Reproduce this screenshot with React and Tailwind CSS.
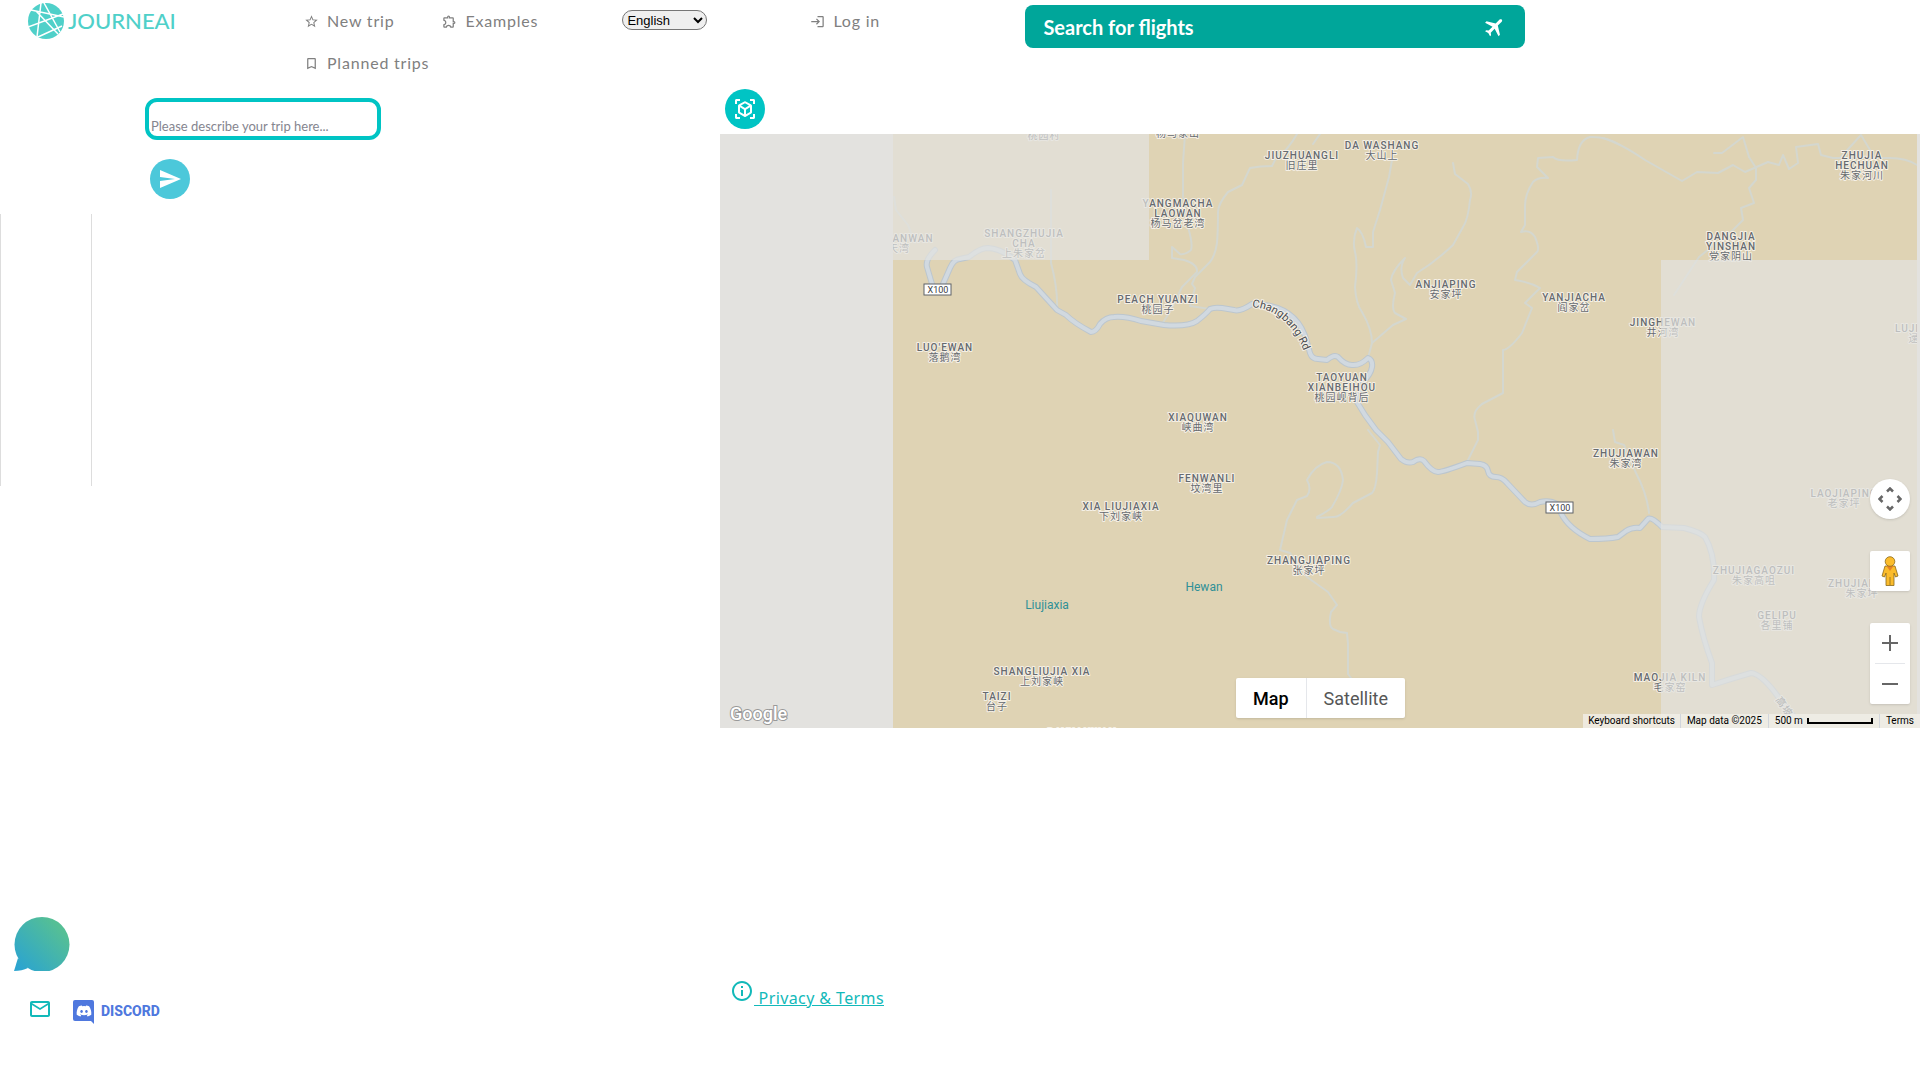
import React, { useState } from 'react';
import {
  MdStarOutline,
  MdOutlineExtension,
  MdBookmarkBorder,
  MdLogin,
  MdSend,
  MdViewInAr,
  MdFlight,
  MdInfoOutline,
  MdMailOutline,
} from 'react-icons/md';
import { FaDiscord } from 'react-icons/fa';

const navLinks = [
  { label: 'New trip', Icon: MdStarOutline },
  { label: 'Examples', Icon: MdOutlineExtension },
  { label: 'Planned trips', Icon: MdBookmarkBorder },
];

// x is the middle of the label, y the baseline of its first line
const places = [
  { x: 324, y: 5, lines: ['桃园村'] },
  { x: 458, y: 3, lines: ['杨马家山'] },
  { x: 458, y: 73, lines: ['YANGMACHA', 'LAOWAN', '杨马岔老湾'] },
  { x: 582, y: 25, lines: ['JIUZHUANGLI', '旧庄里'] },
  { x: 662, y: 15, lines: ['DA WASHANG', '大山上'] },
  { x: 726, y: 154, lines: ['ANJIAPING', '安家坪'] },
  { x: 854, y: 167, lines: ['YANJIACHA', '阎家岔'] },
  { x: 438, y: 169, lines: ['PEACH YUANZI', '桃园子'] },
  { x: 622, y: 247, lines: ['TAOYUAN', 'XIANBEIHOU', '桃园岘背后'] },
  { x: 478, y: 287, lines: ['XIAQUWAN', '峡曲湾'] },
  { x: 304, y: 103, lines: ['SHANGZHUJIA', 'CHA', '上朱家岔'] },
  { x: 193, y: 108, lines: ['ANWAN'] },
  { x: 179, y: 118, lines: ['天湾'] },
  { x: 225, y: 217, lines: ["LUO'EWAN", '落鹅湾'] },
  { x: 943, y: 192, lines: ['JINGHEWAN', '井河湾'] },
  { x: 1011, y: 106, lines: ['DANGJIA', 'YINSHAN', '党家阴山'] },
  { x: 1142, y: 25, lines: ['ZHUJIA', 'HECHUAN', '朱家河川'] },
  { x: 1187, y: 198, lines: ['LUJI'] },
  { x: 1194, y: 208, lines: ['逯'] },
  { x: 906, y: 323, lines: ['ZHUJIAWAN', '朱家湾'] },
  { x: 487, y: 348, lines: ['FENWANLI', '坟湾里'] },
  { x: 401, y: 376, lines: ['XIA LIUJIAXIA', '下刘家峡'] },
  { x: 589, y: 430, lines: ['ZHANGJIAPING', '张家坪'] },
  { x: 322, y: 541, lines: ['SHANGLIUJIA XIA', '上刘家峡'] },
  { x: 277, y: 566, lines: ['TAIZI', '台子'] },
  { x: 362, y: 602, lines: ['DAYUANWAN'] },
  { x: 1124, y: 363, lines: ['LAOJIAPING', '老家坪'] },
  { x: 1034, y: 440, lines: ['ZHUJIAGAOZUI', '朱家高咀'] },
  { x: 1142, y: 453, lines: ['ZHUJIAPING', '朱家坪'] },
  { x: 1057, y: 485, lines: ['GELIPU', '各里铺'] },
  { x: 950, y: 547, lines: ['MAOJIA KILN', '毛家窑'] },
];

const mainRoad = [
  'M215 116 Q205 126 207 133 L212 150',
  'M223 150 L230 134 Q234 125 240 125 L249 123 Q260 114 268 114 Q282 115 295 126 L300 140 Q302 146 316 153 L337 176 L346 181 Q354 189 371 198 Q376 198 380 190 Q386 183 394 183 Q405 182 421 187 L444 191 Q468 193 477 187 Q486 180 490 175 Q494 173 502 174 L514 176 Q520 178 532 170 Q577 170 587 208 L590 219 Q592 225 598 225 L607 226 Q614 220 618 223 Q625 231 632 231 Q640 232 648 224 Q653 226 652 233 Q651 240 643 248 L637 268 L645 281 L656 296 L668 308 L681 325 Q687 330 693 328 Q700 323 704 327 Q712 338 718 338 Q723 338 747 329 L760 330 Q767 331 768 337 Q769 343 776 343 Q782 343 787 349 L805 368 Q811 373 820 368 Q830 366 837 370 L841 379 Q848 394 870 405 Q888 405 898 403 L906 397 Q912 393 920 394 L928 385 Q931 382 942 393 L964 394 Q980 398 985 403 Q995 420 994 446 Q979 470 979 483 Q983 505 992 529 L992 551 Q1010 545 1031 539 Q1042 540 1059 564 L1085 596',
];

const trails = [
  'M465 0 L463 29 V63 L468 93 Q473 110 471 116 Q465 121 460 120 L452 113 V124 L464 126 Q478 130 477 138 L462 153 L451 176 L442 190',
  'M577 0 Q568 16 555 26 L552 32 Q540 32 530 34 L522 51 L508 58 Q498 70 498 78 Q498 96 497 109 Q495 122 490 128 L475 143 L472 150 L475 154 L470 172 L490 175',
  'M600 0 L593 10',
  'M672 26 L669 43 L660 76 L653 98 V113 H646 Q643 98 637 94 Q632 106 635 118 Q638 130 635 153 Q636 170 642 178 Q652 195 652 209 L648 224',
  'M733 29 L735 40 L748 50 Q753 58 750 66 Q748 86 743 93 L733 111 Q715 128 697 139 L690 151 L683 144 Q679 133 685 124 Q672 137 671 146 L675 159 Q671 174 675 179 L686 185 L673 191 L652 209',
  'M900 11 Q885 2 870 3 Q858 6 857 26 Q838 28 833 23 L818 24 L817 33 L828 44 Q818 43 813 48 Q805 60 805 72 V91 L801 98 Q810 95 815 103 Q820 115 817 118 L797 138 L795 146 Q810 148 820 154 L805 169 L812 174 L802 199 Q790 215 783 216 V259 L762 270 Q752 278 755 286 L758 298 V306 L747 328',
  'M883 4 Q900 9 925 26 L962 47 L977 38 L998 39 L1013 31 L1025 38 L1048 28 L1059 31 L1063 21 L1069 35 L1078 29 L1076 13 L1098 10 L1101 21 L1113 24 H1170 Q1186 24 1197 31',
  'M994 19 H1002 L1023 3 L1029 23 L1036 34 V46 L1029 54 L1034 69 L1021 74 L1023 86 L1013 96 L979 123 L954 161',
  'M1120 24 L1141 1 L1150 16',
  'M597 383 Q610 376 612 373 Q622 356 623 346 Q621 328 607 328 Q595 331 587 346 Q592 355 587 362 L577 366 L567 386 L560 416 L570 419 L587 443 L608 458 L617 471 L611 478 Q608 492 613 495 L620 498 L627 499 L628 510 V540 L634 548',
  'M648 296 L660 311 L658 318 L657 339 Q656 355 652 359 L633 369 Q620 384 613 383 L597 384',
  'M893 296 L895 308 L904 311 L916 339 Q927 360 929 379',
  'M174 63 L176 76 L188 91 L195 109',
  'M331 56 V129 Q338 155 337 176',
];

const MapLabels = () => (
  <g
    textAnchor="middle"
    paintOrder="stroke"
    stroke="#f5f0e6"
    strokeWidth="2"
    strokeLinejoin="round"
    fill="#666a6f"
    className="text-[10px] font-medium tracking-widest"
  >
    {places.map((place) =>
      place.lines.map((line, i) => (
        <text
          key={`${place.x}-${line}`}
          x={place.x}
          y={place.y + i * 10}
          className={line.charCodeAt(0) > 255 ? 'font-normal' : 'font-medium'}
        >
          {line}
        </text>
      ))
    )}
    <text x="1064" y="576" transform="rotate(55 1064 573)">高坡</text>
  </g>
);

const Shield = ({ x, y }) => (
  <g>
    <rect x={x} y={y} width="27" height="11" fill="#fff" stroke="#5f6368" />
    <text x={x + 14} y={y + 9} textAnchor="middle" fill="#3c4043" className="text-[9px]">
      X100
    </text>
  </g>
);

const MapCanvas = () => (
  <svg width="1200" height="594" viewBox="0 0 1200 594" className="block font-['Roboto','Noto_Sans_CJK_SC',sans-serif]">
    <defs>
      <path id="changbang" d="M532 173 Q551 175 563 186 Q577 198 585 220" />
    </defs>
    <rect x="173" width="1024" height="594" fill="#dfd3b4" />
    <g fill="none" strokeLinecap="round" strokeLinejoin="round">
      {trails.map((d) => (
        <path key={d} d={d} stroke="#d4d7cf" strokeWidth="2" />
      ))}
      {mainRoad.map((d) => (
        <path key={d} d={d} stroke="#bcc6ce" strokeWidth="6" />
      ))}
      {mainRoad.map((d) => (
        <path key={`${d}-fill`} d={d} stroke="#d1d9e0" strokeWidth="4" />
      ))}
    </g>
    <MapLabels />
    <text
      fill="#4a4d52"
      stroke="#f5f0e6"
      strokeWidth="2"
      paintOrder="stroke"
      className="text-[11px]"
    >
      <textPath href="#changbang">Changbang Rd</textPath>
    </text>
    <g fill="#2f9097" textAnchor="middle" className="text-xs">
      <text x="484" y="457">Hewan</text>
      <text x="327" y="475">Liujiaxia</text>
    </g>
    <Shield x={204} y={150} />
    <Shield x={826} y={368} />

    {/* tiles that are still fading in */}
    <g fill="#e3e2df">
      <rect x="173" width="256" height="126" opacity="0.7" />
      <rect x="941" y="126" width="256" height="468" opacity="0.7" />
      <rect width="173" height="594" />
      <rect x="1197" width="3" height="594" />
    </g>
  </svg>
);

const Pegman = () => (
  <svg width="18" height="30" viewBox="0 0 18 30">
    <path d="M4 10 H14 L17 20 L14.500 21 L13 17 V29.500 H5 V17 L3.500 21 L1 20 Z" fill="#fbbc2c" stroke="#8a6a1c" strokeWidth="0.800" strokeLinejoin="round" />
    <path d="M5.500 10 H12.500 L9 15 Z" fill="#e58225" />
    <path d="M9 21 V29" stroke="#8a6a1c" strokeWidth="0.800" />
    <circle cx="9" cy="5.500" r="4.800" fill="#fbbc2c" stroke="#8a6a1c" strokeWidth="0.800" />
  </svg>
);

const MapView = () => {
  const [mapType, setMapType] = useState('map');

  return (
    <div className="relative h-[594px] overflow-hidden bg-[#e3e2df] font-['Roboto',sans-serif]">
      <MapCanvas />

      <span className="absolute bottom-0 left-[10px] text-lg leading-7 font-medium text-white [paint-order:stroke] [-webkit-text-stroke:2px_#999]">
        Google
      </span>

      <div className="absolute bottom-[10px] left-[516px] flex h-10 rounded-xs bg-white text-lg shadow">
        <button
          type="button"
          onClick={() => setMapType('map')}
          className={mapType === 'map' ? 'px-[17px] pt-px font-medium text-black' : 'px-[17px] pt-px text-[#565656]'}
        >
          Map
        </button>
        <button
          type="button"
          onClick={() => setMapType('satellite')}
          className={
            mapType === 'satellite'
              ? 'border-l border-gray-200 px-[17px] pt-px font-medium text-black'
              : 'border-l border-gray-200 px-[17px] pt-px text-[#565656]'
          }
        >
          Satellite
        </button>
      </div>

      <div className="absolute right-[10px] bottom-6 flex flex-col gap-8">
        <button type="button" aria-label="Map camera controls" className="grid size-10 place-items-center rounded-full bg-white shadow">
          <svg width="24" height="24" viewBox="0 0 24 24" fill="none" stroke="#666" strokeWidth="2.500">
            <path d="M9 4.500 L12 1.500 L15 4.500 M9 19.500 L12 22.500 L15 19.500 M4.500 9 L1.500 12 L4.500 15 M19.500 9 L22.500 12 L19.500 15" />
          </svg>
        </button>
        <button type="button" aria-label="Street View" className="grid size-10 place-items-center rounded-xs bg-white shadow">
          <Pegman />
        </button>
        <div className="flex flex-col items-center rounded-xs bg-white shadow">
          <button type="button" aria-label="Zoom in" className="grid size-10 place-items-center">
            <svg width="16" height="16" viewBox="0 0 16 16" stroke="#666" strokeWidth="2">
              <path d="M8 0 V16 M0 8 H16" />
            </svg>
          </button>
          <span className="h-px w-[30px] bg-gray-200" />
          <button type="button" aria-label="Zoom out" className="grid size-10 place-items-center">
            <svg width="16" height="16" viewBox="0 0 16 16" stroke="#666" strokeWidth="2">
              <path d="M0 8 H16" />
            </svg>
          </button>
        </div>
      </div>

      <div className="absolute right-0 bottom-0 flex h-[14px] divide-x divide-gray-300 bg-[#f1efe9]/80 text-[10px] leading-[14px] text-black">
        <button type="button" className="px-[5px]">Keyboard shortcuts</button>
        <span className="px-[6px]">Map data ©2025</span>
        <span className="flex gap-1 px-[6px]">
          500 m
          <span className="mt-1 h-[6px] w-[66px] border-2 border-t-0 border-black" />
        </span>
        <a href="#terms" className="px-[6px]">Terms</a>
      </div>
    </div>
  );
};

const Logo = () => (
  <a href="#home" className="flex h-[42px] items-center gap-1 pl-7 text-[#4fd0c9]">
    <svg width="36" height="36" viewBox="0 0 36 36">
      <circle cx="18" cy="18" r="18" fill="currentColor" />
      <path
        d="M13 0 L9 34 M16 0 L32 29 M3 7 L36 14 M0 24 L35 11 M8 8 L30 31 M10 34 L34 23"
        stroke="#fff"
        strokeWidth="1.500"
      />
    </svg>
    <span className="font-['Lato',sans-serif] text-[22px] leading-8 font-medium">JOURNEAI</span>
  </a>
);

const DiscordLogo = () => (
  <a href="#discord" className="mt-1 flex items-center gap-[7px] text-[#4f78de]">
    <span className="relative grid size-[21px] place-items-center rounded-xs bg-[#4f78de]">
      <FaDiscord className="size-4 text-white" />
      <svg width="6" height="6" viewBox="0 0 6 6" className="absolute right-0 -bottom-[3px]">
        <path d="M0 0 H6 V6 Z" fill="#4f78de" />
      </svg>
    </span>
    <span className="font-['Roboto',sans-serif] text-sm leading-5 font-extrabold">DISCORD</span>
  </a>
);

const Header = () => {
  const [language, setLanguage] = useState('en');

  return (
    <header className="flex h-[89px] items-start font-['Lato',sans-serif] text-[#808080]">
      <div className="w-[15%]">
        <Logo />
      </div>
      <nav className="flex w-[17%] flex-wrap gap-x-4">
        {navLinks.map(({ label, Icon }) => (
          <a key={label} href="#trips" className="flex h-[42px] items-center gap-2 px-4 tracking-wider">
            <Icon className="size-[15px]" />
            {label}
          </a>
        ))}
      </nav>
      <div className="w-[10%] pt-[10px] pl-2">
        <select
          aria-label="Language"
          value={language}
          onChange={(e) => setLanguage(e.target.value)}
          className="block h-5 w-[85px] rounded-full border border-[#767676] bg-[#efefef] font-['Liberation_Sans',sans-serif] text-[13px] text-black"
        >
          <option value="en">English</option>
          <option value="es">Español</option>
          <option value="fr">Français</option>
        </select>
      </div>
      <div className="w-[219px] pl-1">
        <a href="#login" className="flex h-[42px] items-center gap-2 tracking-wider">
          <MdLogin className="size-[15px]" />
          Log in
        </a>
      </div>
      <button
        type="button"
        className="mt-[5px] flex h-[43px] w-[500px] items-center justify-between rounded-lg bg-[#00a69a] px-[18px] text-xl font-bold text-white"
      >
        Search for flights
        <MdFlight className="size-6 rotate-45" />
      </button>
    </header>
  );
};

const App = () => {
  const [trip, setTrip] = useState('');

  return (
    <div className="flex min-h-screen flex-col bg-white">
      <Header />

      <main className="flex">
        <section className="w-[37.5%]">
          <form className="mt-[9px] ml-[145px]" onSubmit={(e) => e.preventDefault()}>
            <textarea
              aria-label="Trip description"
              rows={1}
              value={trip}
              onChange={(e) => setTrip(e.target.value)}
              placeholder="Please describe your trip here..."
              className="block h-[42px] w-[236px] resize-none overflow-hidden rounded-xl border-4 border-[#00c4c4] px-[2px] pt-4 font-['Lato',sans-serif] text-[13px] leading-4 text-[#555] outline-none placeholder:text-[#85858f]"
            />
            <button type="submit" aria-label="Send" className="mt-[19px] ml-[5px] grid size-10 place-items-center rounded-full bg-[#4cc8da] text-white">
              <MdSend className="size-6" />
            </button>
          </form>
          <div className="mt-[15px] h-[272px] w-[92px] border-x border-[#ddd]" />
        </section>

        <section className="w-[62.5%]">
          <button type="button" aria-label="3D view" className="mb-[5px] ml-[5px] grid size-10 place-items-center rounded-full bg-[#00c4c4] text-white">
            <MdViewInAr className="size-6" />
          </button>
          <MapView />
        </section>
      </main>

      <footer className="mt-auto flex h-[164px] text-[#12b9b9]">
        <div className="w-[37.5%]">
          <button type="button" aria-label="Open chat" className="ml-[14px] block">
            <svg width="56" height="55" viewBox="0 0 56 55">
              <defs>
                <linearGradient id="chat" gradientUnits="userSpaceOnUse" x1="4" y1="52" x2="46" y2="12">
                  <stop offset="0" stopColor="#2ba4d0" />
                  <stop offset="1" stopColor="#55bf95" />
                </linearGradient>
              </defs>
              <circle cx="28" cy="28.500" r="27.500" fill="url(#chat)" />
              <path d="M4 42 L0 55 Q8 55 14 52 Z" fill="url(#chat)" />
            </svg>
          </button>
          <div className="mt-[25px] ml-7 flex items-center gap-[21px]">
            <a href="#mail" aria-label="Email us">
              <MdMailOutline className="size-6" />
            </a>
            <DiscordLogo />
          </div>
        </div>
        <div className="flex w-[62.5%] items-start pt-[63px] pl-[10px]">
          <MdInfoOutline className="size-6" />
          <a href="#privacy" className="mt-[5px] font-['Noto_Sans',sans-serif] leading-7 tracking-wide whitespace-pre underline">
            {' Privacy & Terms'}
          </a>
        </div>
      </footer>
    </div>
  );
};

export default App;
